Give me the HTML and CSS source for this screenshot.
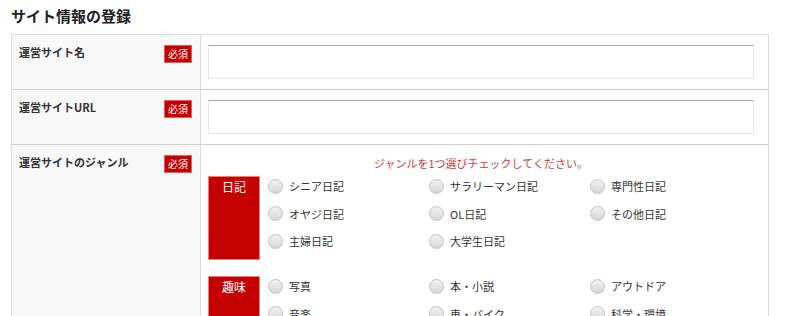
FILE: index.html
```html
<!DOCTYPE html>
<html lang="ja">
<head>
<meta charset="utf-8">
<title>サイト情報の登録</title>
<link rel="stylesheet" href="styles.css">
</head>
<body>
<h2 class="title">サイト情報の登録</h2>
<div class="form">
  <div class="row">
    <div class="label"><span class="label-text">運営サイト名</span><span class="req">必須</span></div>
    <div class="field"><input class="text" type="text"></div>
  </div>
  <div class="row">
    <div class="label"><span class="label-text">運営サイトURL</span><span class="req">必須</span></div>
    <div class="field"><input class="text" type="text"></div>
  </div>
  <div class="row">
    <div class="label"><span class="label-text">運営サイトのジャンル</span><span class="req">必須</span></div>
    <div class="field">
      <p class="notice">ジャンルを1つ選びチェックしてください。</p>
      <div class="group">
        <div class="cat">日記</div>
        <div class="opts">
          <label class="opt"><span class="radio"></span>シニア日記</label>
          <label class="opt"><span class="radio"></span>サラリーマン日記</label>
          <label class="opt"><span class="radio"></span>専門性日記</label>
          <label class="opt"><span class="radio"></span>オヤジ日記</label>
          <label class="opt"><span class="radio"></span>OL日記</label>
          <label class="opt"><span class="radio"></span>その他日記</label>
          <label class="opt"><span class="radio"></span>主婦日記</label>
          <label class="opt"><span class="radio"></span>大学生日記</label>
        </div>
      </div>
      <div class="group">
        <div class="cat">趣味</div>
        <div class="opts">
          <label class="opt"><span class="radio"></span>写真</label>
          <label class="opt"><span class="radio"></span>本・小説</label>
          <label class="opt"><span class="radio"></span>アウトドア</label>
          <label class="opt"><span class="radio"></span>音楽</label>
          <label class="opt"><span class="radio"></span>車・バイク</label>
          <label class="opt"><span class="radio"></span>科学・環境</label>
        </div>
      </div>
    </div>
  </div>
</div>
</body>
</html>
```
FILE: styles.css
```css
html, body {
  margin: 0;
  padding: 0;
  background: #fff;
}
body {
  font-family: "Noto Sans CJK JP", "Noto Sans", sans-serif;
  color: #333;
  padding: 0 0 0 11px;
  width: 758px;
}
.title {
  margin: 0;
  padding-top: 6px;
  height: 28px;
  font-size: 15px;
  line-height: 20px;
  font-weight: bold;
  color: #222;
}
.form {
  border: 1px solid #dcdcdc;
  border-bottom: none;
}
.row {
  display: flex;
  border-bottom: 1px solid #cfcfcf;
}
.row:last-child {
  border-bottom: none;
}
.label {
  width: 173px;
  flex: none;
  background: #f8f8f8;
  border-right: 1px solid #dcdcdc;
  padding: 10px 8px 0 7px;
  display: flex;
  justify-content: space-between;
  align-items: flex-start;
}
.label-text {
  font-size: 11px;
  line-height: 18px;
  font-weight: bold;
  color: #333;
  margin-top: -2px;
}
.req {
  display: block;
  background: #c40000;
  border: 1px solid #e06060;
  color: #fff;
  font-size: 10px;
  line-height: 16px;
  padding: 0 3px;
}
.field {
  flex: 1;
  padding: 10px 14px 10px 7px;
}
.text {
  display: block;
  box-sizing: border-box;
  width: 100%;
  height: 34px;
  margin: 0;
  border: 1px solid #e6e6e6;
  border-top-color: #a8a8a8;
  background: #fff;
}
.notice {
  margin: -1px 0 4px;
  text-align: center;
  color: #d43a3a;
  font-size: 11px;
  line-height: 18px;
}
.group {
  display: flex;
  margin-bottom: 16px;
}
.cat {
  width: 50px;
  flex: none;
  background: #c40000;
  border: 1px solid #f08080;
  color: #fff;
  font-size: 12px;
  line-height: 20px;
  text-align: center;
}
.opts {
  display: grid;
  grid-template-columns: 161px 161px 161px;
  grid-auto-rows: 20px;
  row-gap: 7.5px;
  padding: 0 0 9px 8px;
}
.opt {
  display: flex;
  align-items: center;
  font-size: 11px;
  color: #333;
}
.radio {
  width: 13px;
  height: 13px;
  border-radius: 50%;
  border: 1px solid #c4c4c4;
  background: linear-gradient(#f2f2f2, #d6d6d6);
  margin-right: 6px;
  flex: none;
}
```
